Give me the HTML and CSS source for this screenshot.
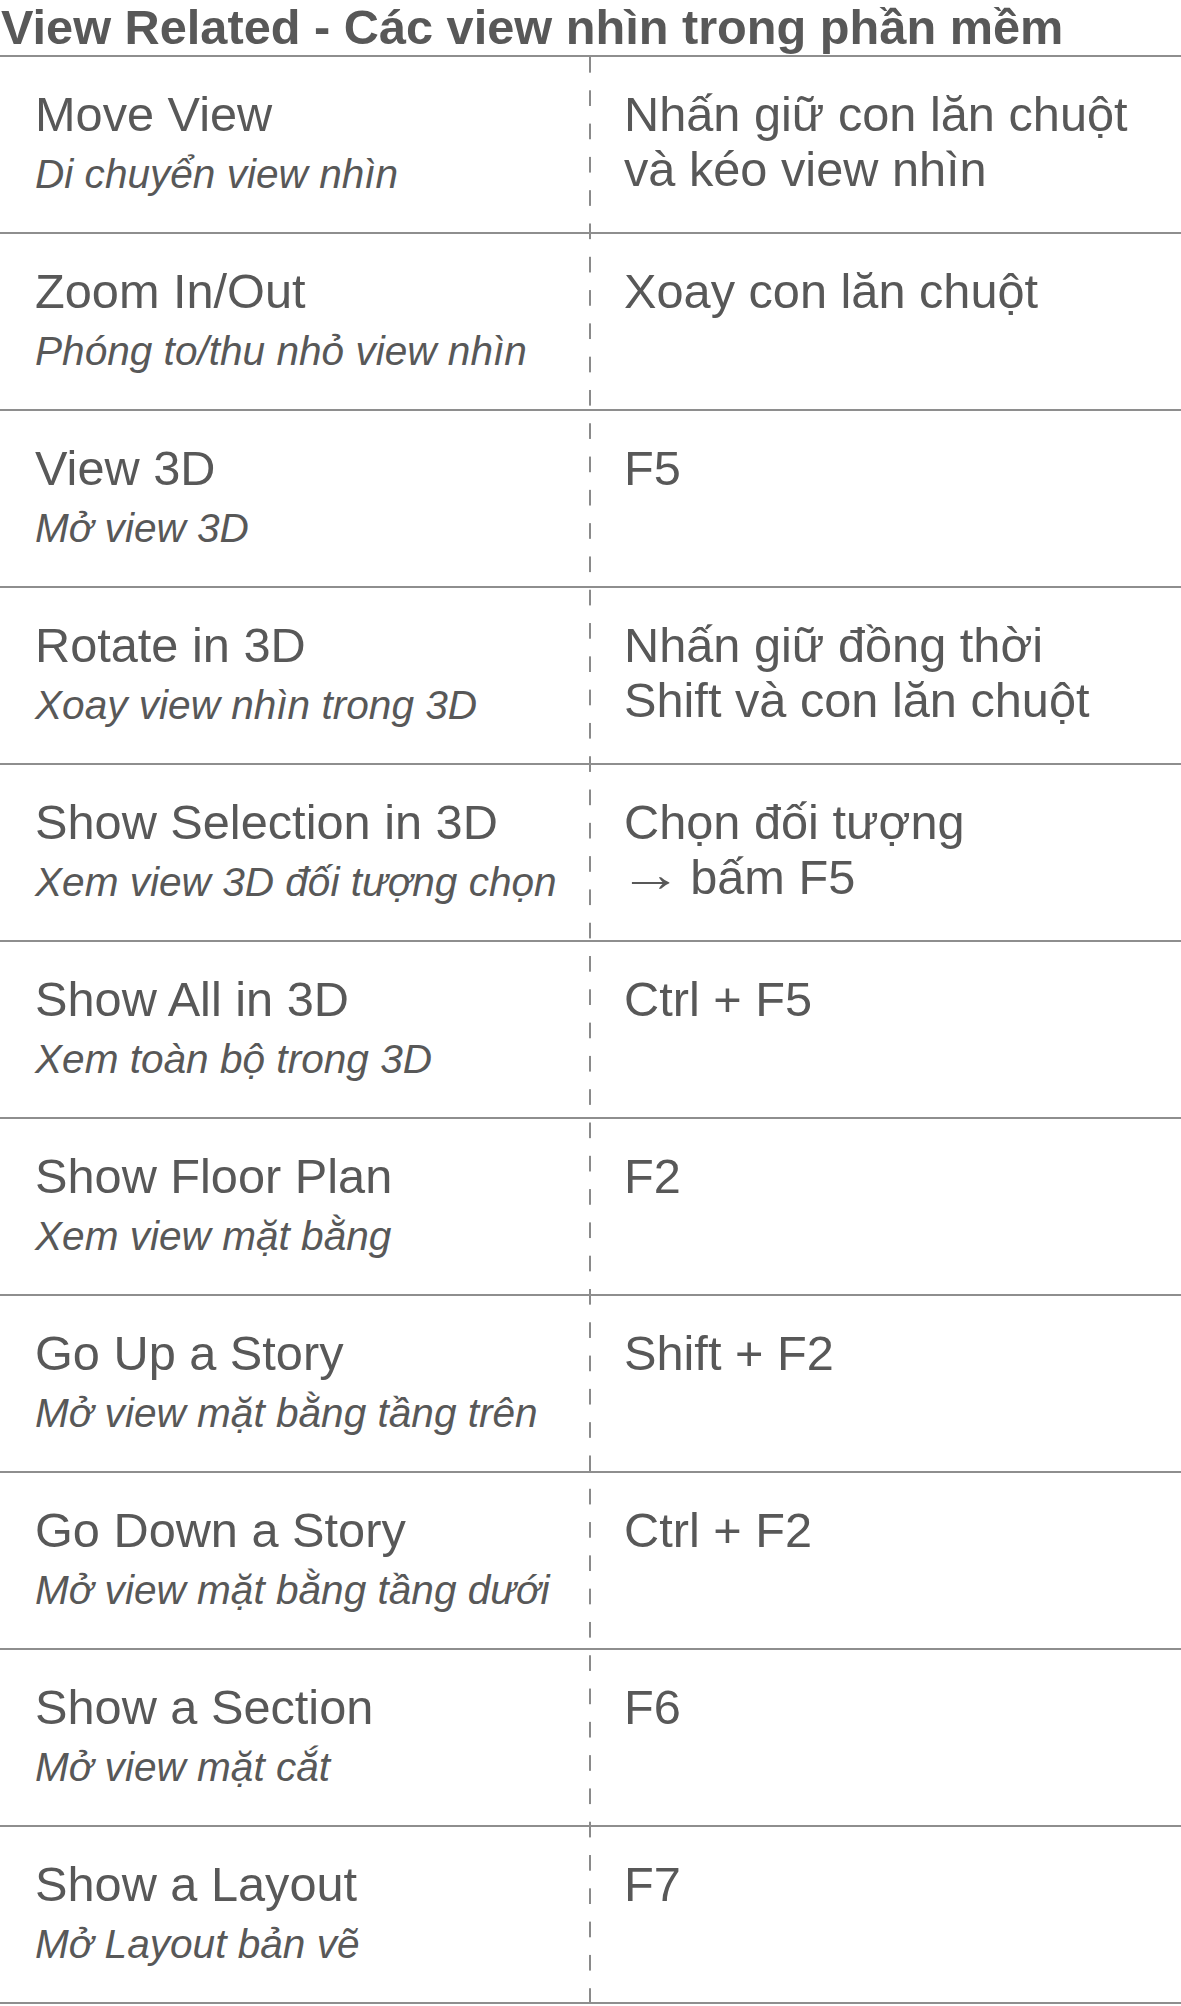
FILE: index.html
```html
<!DOCTYPE html>
<html lang="vi">
<head>
  <meta charset="UTF-8">
  <meta name="viewport" content="width=device-width, initial-scale=1.0">
  <title>View Related - Các view nhìn trong phần mềm</title>
  <link rel="stylesheet" href="styles.css">
</head>
<body>

  <!-- Section title -->
  <h1 class="title">View Related - Các view nhìn trong phần mềm</h1>

  <!-- Shortcut table -->
  <div class="shortcuts">
    <div class="row">
      <div class="cell name">
        <p class="cmd">Move View</p>
        <p class="desc">Di chuyển view nhìn</p>
      </div>
      <div class="cell keys">Nhấn giữ con lăn chuột<br>và kéo view nhìn</div>
    </div>

    <div class="row">
      <div class="cell name">
        <p class="cmd">Zoom In/Out</p>
        <p class="desc">Phóng to/thu nhỏ view nhìn</p>
      </div>
      <div class="cell keys">Xoay con lăn chuột</div>
    </div>

    <div class="row">
      <div class="cell name">
        <p class="cmd">View 3D</p>
        <p class="desc">Mở view 3D</p>
      </div>
      <div class="cell keys">F5</div>
    </div>

    <div class="row">
      <div class="cell name">
        <p class="cmd">Rotate in 3D</p>
        <p class="desc">Xoay view nhìn trong 3D</p>
      </div>
      <div class="cell keys">Nhấn giữ đồng thời<br>Shift và con lăn chuột</div>
    </div>

    <div class="row">
      <div class="cell name">
        <p class="cmd">Show Selection in 3D</p>
        <p class="desc">Xem view 3D đối tượng chọn</p>
      </div>
      <div class="cell keys">Chọn đối tượng<br><span class="arrow">→</span> bấm F5</div>
    </div>

    <div class="row">
      <div class="cell name">
        <p class="cmd">Show All in 3D</p>
        <p class="desc">Xem toàn bộ trong 3D</p>
      </div>
      <div class="cell keys">Ctrl + F5</div>
    </div>

    <div class="row">
      <div class="cell name">
        <p class="cmd">Show Floor Plan</p>
        <p class="desc">Xem view mặt bằng</p>
      </div>
      <div class="cell keys">F2</div>
    </div>

    <div class="row">
      <div class="cell name">
        <p class="cmd">Go Up a Story</p>
        <p class="desc">Mở view mặt bằng tầng trên</p>
      </div>
      <div class="cell keys">Shift + F2</div>
    </div>

    <div class="row">
      <div class="cell name">
        <p class="cmd">Go Down a Story</p>
        <p class="desc">Mở view mặt bằng tầng dưới</p>
      </div>
      <div class="cell keys">Ctrl + F2</div>
    </div>

    <div class="row">
      <div class="cell name">
        <p class="cmd">Show a Section</p>
        <p class="desc">Mở view mặt cắt</p>
      </div>
      <div class="cell keys">F6</div>
    </div>

    <div class="row">
      <div class="cell name">
        <p class="cmd">Show a Layout</p>
        <p class="desc">Mở Layout bản vẽ</p>
      </div>
      <div class="cell keys">F7</div>
    </div>
  </div>

</body>
</html>
```

FILE: styles.css
```css
* {
  box-sizing: border-box;
  margin: 0;
  padding: 0;
}

body {
  font-family: "Liberation Sans", Arial, sans-serif;
  background-color: #fff;
  color: #585858;
}

/* Title with rule underneath */
.title {
  font-size: 48.7px;
  font-weight: bold;
  line-height: 55px;
  padding-left: 1px;
  border-bottom: 2px solid #8e8e8e;
  white-space: nowrap;
}

/* Table body, the dashed divider runs through all rows */
.shortcuts {
  background-image: linear-gradient(to bottom, #8a8a8a 0 16px, transparent 16px 100%);
  background-size: 2px 33.3px;
  background-position: 589px 0;
  background-repeat: repeat-y;
}

.row {
  display: grid;
  grid-template-columns: 590px 1fr;
  height: 177px;
  border-bottom: 2px solid #8e8e8e;
}

.cell {
  padding-top: 30px;
}

.name {
  padding-left: 35px;
}

.keys {
  padding-left: 34px;
  font-size: 48.7px;
  line-height: 55px;
}

/* wide thin arrow like the original */
.arrow {
  display: inline-block;
  transform: translateY(-3px) scaleX(1.3);
  transform-origin: left center;
  margin-left: -5px;
  margin-right: 9px;
}

.cmd {
  font-size: 48.7px;
  line-height: 55px;
}

.desc {
  font-size: 40.6px;
  font-style: italic;
  line-height: 46px;
  margin-top: 9px;
  white-space: nowrap;
}
```
